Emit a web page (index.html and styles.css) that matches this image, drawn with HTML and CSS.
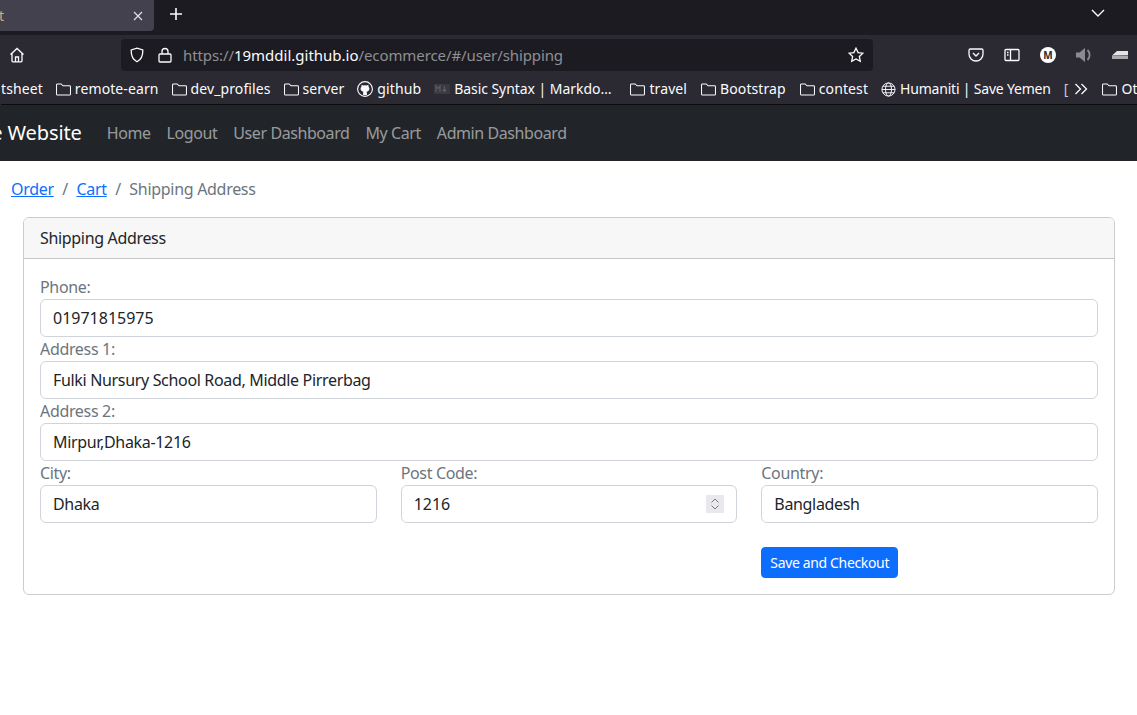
FILE: index.html
```html
<!DOCTYPE html>
<html lang="en">
<head>
<meta charset="utf-8">
<title>Shipping Address</title>
<link rel="stylesheet" href="styles.css">
</head>
<body>
<div class="browser">
  <div class="tabstrip">
    <div class="tab">
      <span class="tab-title">t</span>
      <svg class="tab-close" width="10" height="10" viewBox="0 0 10 10"><path d="M1 1l8 8M9 1l-8 8"/></svg>
    </div>
    <svg class="tab-new" width="14" height="14" viewBox="0 0 14 14"><path d="M7 1v12M1 7h12"/></svg>
    <svg class="tab-list" width="14" height="8" viewBox="0 0 14 8"><path d="M1 1l6 6 6-6"/></svg>
  </div>
  <div class="toolbar">
    <svg class="ico home" width="16" height="16" viewBox="0 0 16 16"><path d="M1.500 7.500L8 1.500l6.500 6M3 6.500V14a.8.8 0 0 0 .8.8h8.400a.8.8 0 0 0 .8-.8V6.500M6.500 14.500V10h3v4.500"/></svg>
    <div class="urlbar">
      <svg class="ico shield" width="16" height="16" viewBox="0 0 16 16"><path d="M8 1.200l5.800 1.700c.2 5.600-1.600 9.600-5.800 11.900C3.800 12.500 2 8.500 2.200 2.900z"/></svg>
      <svg class="ico lock" width="14" height="16" viewBox="0 0 14 16"><path d="M4 7V4.500a3 3 0 0 1 6 0V7M2 7h10a1 1 0 0 1 1 1v6a1 1 0 0 1-1 1H2a1 1 0 0 1-1-1V8a1 1 0 0 1 1-1z"/></svg>
      <div class="url">https://<b>19mddil.github.io</b>/ecommerce/#/user/shipping</div>
      <svg class="ico star" width="16" height="16" viewBox="0 0 16 16"><path d="M8 1.200l2.100 4.400 4.800.6-3.500 3.300.9 4.800L8 12l-4.300 2.300.9-4.800L1.100 6.200l4.800-.6z"/></svg>
    </div>
    <div class="tool-right">
      <svg class="ico" width="16" height="16" viewBox="0 0 16 16"><path d="M2.500 2h11A1.500 1.500 0 0 1 15 3.500V7a7 7 0 0 1-14 0V3.500A1.500 1.500 0 0 1 2.500 2zM5 6l3 3 3-3"/></svg>
      <svg class="ico" width="16" height="16" viewBox="0 0 16 16"><path d="M2 2.500h12a1 1 0 0 1 1 1v9a1 1 0 0 1-1 1H2a1 1 0 0 1-1-1v-9a1 1 0 0 1 1-1zM6.500 2.500v11M3 5.500h1.500M3 8h1.500"/></svg>
      <div class="avatar">M</div>
      <svg class="speaker" width="16" height="16" viewBox="0 0 16 16"><path class="sp-fill" d="M0 5.500h3.500L9 1v14l-5.500-4.500H0z"/><path class="sp-line" d="M11.500 3a7 7 0 0 1 0 10"/></svg>
      <svg class="eraser" width="16" height="10" viewBox="0 0 16 10"><path class="er-top" d="M0 5.500L5 1h11v4z"/><path class="er-bottom" d="M0 5.500h16V9H0z"/></svg>
    </div>
  </div>
  <div class="bookmarks">
    <span class="bm-text">tsheet</span>
    <span class="bm"><svg class="folder" viewBox="0 0 16 14"><path d="M1.500 1h4l2 2h7a1 1 0 0 1 1 1v8a1 1 0 0 1-1 1h-13a1 1 0 0 1-1-1V2a1 1 0 0 1 1-1z"/></svg>remote-earn</span>
    <span class="bm"><svg class="folder" viewBox="0 0 16 14"><path d="M1.500 1h4l2 2h7a1 1 0 0 1 1 1v8a1 1 0 0 1-1 1h-13a1 1 0 0 1-1-1V2a1 1 0 0 1 1-1z"/></svg>dev_profiles</span>
    <span class="bm"><svg class="folder" viewBox="0 0 16 14"><path d="M1.500 1h4l2 2h7a1 1 0 0 1 1 1v8a1 1 0 0 1-1 1h-13a1 1 0 0 1-1-1V2a1 1 0 0 1 1-1z"/></svg>server</span>
    <span class="bm"><svg class="gh" width="16" height="16" viewBox="0 0 16 16"><circle class="gh-ring" cx="8" cy="8" r="7.400"/><path class="gh-cat" d="M4.600 3.800l1.700.8a5 5 0 0 1 3.400 0l1.700-.8.2 2c.6.700.8 1.300.8 2 0 1.800-1.300 2.800-3 3 .4.400.5.800.5 1.200v2H6.100v-2c0-.4.100-.8.500-1.200-1.700-.2-3-1.200-3-3 0-.7.200-1.300.8-2z"/></svg>github</span>
    <span class="bm wide"><svg class="md" width="16" height="10" viewBox="0 0 16 10"><rect x="0" y="0" width="16" height="10"/><path d="M2 8V2l2 2.500L6 2v6M10.500 2v5M8.800 5.500l1.700 2 1.700-2"/></svg><span class="tight">Basic Syntax | Markdo…</span></span>
    <span class="bm"><svg class="folder" viewBox="0 0 16 14"><path d="M1.500 1h4l2 2h7a1 1 0 0 1 1 1v8a1 1 0 0 1-1 1h-13a1 1 0 0 1-1-1V2a1 1 0 0 1 1-1z"/></svg>travel</span>
    <span class="bm nudge"><svg class="folder" viewBox="0 0 16 14"><path d="M1.500 1h4l2 2h7a1 1 0 0 1 1 1v8a1 1 0 0 1-1 1h-13a1 1 0 0 1-1-1V2a1 1 0 0 1 1-1z"/></svg>Bootstrap</span>
    <span class="bm nudge"><svg class="folder" viewBox="0 0 16 14"><path d="M1.500 1h4l2 2h7a1 1 0 0 1 1 1v8a1 1 0 0 1-1 1h-13a1 1 0 0 1-1-1V2a1 1 0 0 1 1-1z"/></svg>contest</span>
    <span class="bm"><svg class="globe" width="15" height="15" viewBox="0 0 16 16"><circle cx="8" cy="8" r="7"/><ellipse cx="8" cy="8" rx="3.200" ry="7"/><path d="M1 8h14M2 4.500h12M2 11.500h12"/></svg><span class="tighter">Humaniti | Save Yemen</span></span>
    <span class="bm-text clip">[</span>
    <svg class="chev" width="14" height="12" viewBox="0 0 14 12"><path d="M1.500 1l5 5-5 5M7.500 1l5 5-5 5"/></svg>
    <span class="bm nudge"><svg class="folder" viewBox="0 0 16 14"><path d="M1.500 1h4l2 2h7a1 1 0 0 1 1 1v8a1 1 0 0 1-1 1h-13a1 1 0 0 1-1-1V2a1 1 0 0 1 1-1z"/></svg>Ot</span>
  </div>
</div>

<nav class="navbar">
  <a class="brand">Ecommerce Website</a>
  <a class="nav-link">Home</a>
  <a class="nav-link">Logout</a>
  <a class="nav-link">User Dashboard</a>
  <a class="nav-link">My Cart</a>
  <a class="nav-link">Admin Dashboard</a>
</nav>

<main class="page">
  <ol class="breadcrumb">
    <li><a href="#">Order</a></li>
    <li class="sep">/</li>
    <li><a href="#">Cart</a></li>
    <li class="sep">/</li>
    <li class="active">Shipping Address</li>
  </ol>
  <section class="card">
    <header class="card-header">Shipping Address</header>
    <form class="card-body">
      <label class="label">Phone:</label>
      <input class="control digits" type="text" value="01971815975">
      <label class="label">Address 1:</label>
      <input class="control" type="text" value="Fulki Nursury School Road, Middle Pirrerbag">
      <label class="label">Address 2:</label>
      <input class="control" type="text" value="Mirpur,Dhaka-1216">
      <div class="grid">
        <div>
          <label class="label">City:</label>
          <input class="control" type="text" value="Dhaka">
        </div>
        <div>
          <label class="label">Post Code:</label>
          <div class="control number">
            <input class="bare digits" type="text" value="1216">
            <svg class="spin" width="18" height="18" viewBox="0 0 18 18"><rect width="18" height="18" fill="#e9e9ed"/><path d="M5.500 7.500L9 4l3.500 3.500M5.500 10.500L9 14l3.500-3.500"/></svg>
          </div>
        </div>
        <div>
          <label class="label">Country:</label>
          <input class="control" type="text" value="Bangladesh">
        </div>
        <div class="btn-cell">
          <button class="btn" type="button">Save and Checkout</button>
        </div>
      </div>
    </form>
  </section>
</main>
</body>
</html>
```

FILE: styles.css
```css
* { box-sizing: border-box; }
html, body { margin: 0; padding: 0; }
body {
  background: #fff;
  color: #212529;
  font-family: "Noto Sans", sans-serif;
  font-size: 16px;
  line-height: 24px;
  letter-spacing: -.33px;
  overflow: hidden;
  height: 715px;
}

/* browser chrome */
.browser { background: #2b2a33; color: #fbfbfe; letter-spacing: 0; }
.tabstrip {
  height: 35px;
  background: #1c1b22;
  display: flex;
  align-items: flex-start;
  position: relative;
}
.tab {
  width: 154px;
  height: 31px;
  background: #42414d;
  border-bottom-right-radius: 4px;
  display: flex;
  align-items: center;
  justify-content: space-between;
  padding-right: 11px;
  font-size: 14px;
}
.tab-title { color: #e8a07a; margin-left: -1px; }
.tab-close path { stroke: #e0e0e6; stroke-width: 1.2; fill: none; }
.tab-new { margin: 7px 0 0 15px; }
.tab-new path { stroke: #fbfbfe; stroke-width: 1.6; fill: none; }
.tab-list { margin: 9px 32px 0 auto; }
.tab-list path { stroke: #fbfbfe; stroke-width: 1.4; fill: none; }

.toolbar {
  height: 43px;
  display: flex;
  align-items: center;
  padding: 4px 9px 7px 9px;
}
.ico { fill: none; stroke: #fbfbfe; stroke-width: 1.300; flex: none; }
.home { margin-right: 96px; }
.urlbar {
  width: 752px;
  height: 32px;
  background: #1c1b22;
  border-radius: 4px;
  display: flex;
  align-items: center;
  padding: 0 9px 0 8px;
}
.shield { margin-right: 13px; }
.lock { margin-right: 11px; }
.url {
  flex: 1;
  color: #8f8f94;
  font-size: 15px;
  letter-spacing: -.1px;
  white-space: nowrap;
}
.url b { color: #fbfbfe; font-weight: 400; letter-spacing: 0; }
.tool-right {
  display: flex;
  align-items: center;
  gap: 20px;
  margin-left: 95px;
  flex: none;
}
.avatar {
  width: 16px;
  height: 16px;
  border-radius: 50%;
  background: #fff;
  color: #2b2a33;
  font-size: 10px;
  font-weight: 700;
  line-height: 16px;
  text-align: center;
}
.sp-fill { fill: #8a8a90; }
.sp-line { fill: none; stroke: #8a8a90; stroke-width: 1.800; }
.er-top { fill: #e4e4e6; }
.er-bottom { fill: #a9a9ae; }

.bookmarks {
  height: 27px;
  margin-left: 1px;
  display: flex;
  align-items: center;
  gap: 13px;
  font-size: 14px;
  letter-spacing: .1px;
  white-space: nowrap;
  overflow: hidden;
  border-bottom: 1px solid #0c0c0d;
  padding-bottom: 4px;
}
.bm { display: flex; align-items: center; gap: 4px; flex: none; }
.bm-text { flex: none; }
.wide { margin-right: 6px; }
.nudge { margin-left: 1px; }
.tight { letter-spacing: -.05px; }
.tighter { letter-spacing: -.2px; }
.folder { width: 15px; height: 13px; fill: none; stroke: #fbfbfe; stroke-width: 1.100; flex: none; }
.gh-ring { fill: none; stroke: #fbfbfe; stroke-width: 1.100; }
.gh-cat { fill: #fbfbfe; }
.md rect { fill: #3a3942; }
.md path { fill: none; stroke: #5c5b64; stroke-width: 1.200; }
.globe { fill: none; stroke: #fbfbfe; stroke-width: 1; flex: none; }
.chev { fill: none; stroke: #fbfbfe; stroke-width: 1.300; flex: none; margin-left: -7px; }
.clip { color: #c9c9cc; }

/* site navbar */
.navbar {
  height: 56px;
  background: #212529;
  display: flex;
  align-items: center;
  margin-left: -107px;
  gap: 16px;
}
.brand { color: #fff; font-size: 20px; letter-spacing: -.1px; white-space: nowrap; margin-right: 9px; }
.nav-link { color: rgba(255, 255, 255, .55); letter-spacing: -.42px; white-space: nowrap; }

/* content */
.breadcrumb {
  list-style: none;
  display: flex;
  gap: 8.500px;
  margin: 0;
  padding: 16px 11px;
  letter-spacing: -.3px;
}
.breadcrumb a { color: #0d6efd; }
.sep, .active { color: #6c757d; }
.card {
  margin: 0 22px 0 23px;
  border: 1px solid rgba(0, 0, 0, .2);
  border-radius: 6px;
  overflow: hidden;
}
.card-header {
  height: 41px;
  padding: 8px 16px;
  background: #f7f7f7;
  border-bottom: 1px solid rgba(0, 0, 0, .2);
}
.card-body { padding: 16px; display: block; }
.label { display: block; height: 24px; color: #6c757d; }
.control {
  display: block;
  width: 100%;
  height: 38px;
  padding: 6px 12px;
  border: 1px solid #ced4da;
  border-radius: 6px;
  background: #fff;
  color: #212529;
  font: inherit;
  letter-spacing: -.33px;
  outline: none;
}
.number { display: flex; align-items: center; justify-content: space-between; padding-right: 12px; }
.bare { border: 0; padding: 0; flex: 1; min-width: 0; font: inherit; color: inherit; outline: none; background: none; }
.digits { letter-spacing: 0; }
.spin { flex: none; }
.spin path { fill: none; stroke: #7a7a80; stroke-width: 1; }
.grid { display: grid; grid-template-columns: repeat(3, 1fr); column-gap: 24px; }
.btn-cell { grid-column: 3; margin-top: 24px; height: 31px; }
.btn {
  height: 31px;
  padding: 4px 8px;
  border: 1px solid #0d6efd;
  border-radius: 4px;
  background: #0d6efd;
  color: #fff;
  font: inherit;
  font-size: 14px;
  line-height: 21px;
  letter-spacing: -.35px;
}
```
